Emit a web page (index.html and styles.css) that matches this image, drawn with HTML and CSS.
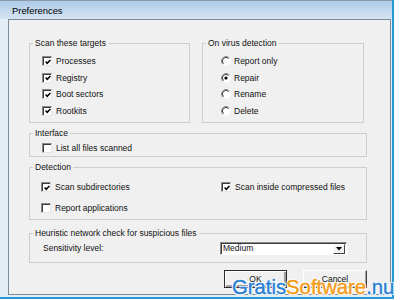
FILE: index.html
```html
<!DOCTYPE html>
<html>

<head>
    <meta charset="utf-8">
    <title>Preferences</title>
    <link rel="stylesheet" href="styles.css">
</head>

<body>
    <div class="window">
        <div class="titlebar">Preferences</div>
        <div class="frame">
            <div class="client">
                <div class="cols">
                    <fieldset class="group">
                        <legend>Scan these targets</legend>
                        <div class="rows targets">
                            <label class="opt"><span class="check"><svg viewBox="0 0 6 6"><path d="M0.6 2.6 L2.2 4.3 L5.4 0.9" /></svg></span>Processes</label>
                            <label class="opt"><span class="check"><svg viewBox="0 0 6 6"><path d="M0.6 2.6 L2.2 4.3 L5.4 0.9" /></svg></span>Registry</label>
                            <label class="opt"><span class="check"><svg viewBox="0 0 6 6"><path d="M0.6 2.6 L2.2 4.3 L5.4 0.9" /></svg></span>Boot sectors</label>
                            <label class="opt"><span class="check"><svg viewBox="0 0 6 6"><path d="M0.6 2.6 L2.2 4.3 L5.4 0.9" /></svg></span>Rootkits</label>
                        </div>
                    </fieldset>
                    <fieldset class="group">
                        <legend>On virus detection</legend>
                        <div class="rows actions">
                            <label class="opt"><svg class="radio" viewBox="0 0 10 10"><circle cx="5" cy="5" r="4.5" fill="#fff" /><path class="dark" d="M8.2 1.8 A4.5 4.5 0 0 0 1.8 8.2" /><path class="darker" d="M7.5 2.5 A3.5 3.5 0 0 0 2.5 7.5" /></svg>Report only</label>
                            <label class="opt"><svg class="radio" viewBox="0 0 10 10"><circle cx="5" cy="5" r="4.5" fill="#fff" /><path class="dark" d="M8.2 1.8 A4.5 4.5 0 0 0 1.8 8.2" /><path class="darker" d="M7.5 2.5 A3.5 3.5 0 0 0 2.5 7.5" /><circle cx="5" cy="5" r="1.6" fill="#000" /></svg>Repair</label>
                            <label class="opt"><svg class="radio" viewBox="0 0 10 10"><circle cx="5" cy="5" r="4.5" fill="#fff" /><path class="dark" d="M8.2 1.8 A4.5 4.5 0 0 0 1.8 8.2" /><path class="darker" d="M7.5 2.5 A3.5 3.5 0 0 0 2.5 7.5" /></svg>Rename</label>
                            <label class="opt"><svg class="radio" viewBox="0 0 10 10"><circle cx="5" cy="5" r="4.5" fill="#fff" /><path class="dark" d="M8.2 1.8 A4.5 4.5 0 0 0 1.8 8.2" /><path class="darker" d="M7.5 2.5 A3.5 3.5 0 0 0 2.5 7.5" /></svg>Delete</label>
                        </div>
                    </fieldset>
                </div>

                <fieldset class="group interface">
                    <legend>Interface</legend>
                    <div class="rows single">
                        <label class="opt"><span class="check"></span>List all files scanned</label>
                    </div>
                </fieldset>

                <fieldset class="group detection">
                    <legend>Detection</legend>
                    <div class="detect-grid">
                        <label class="opt"><span class="check"><svg viewBox="0 0 6 6"><path d="M0.6 2.6 L2.2 4.3 L5.4 0.9" /></svg></span>Scan subdirectories</label>
                        <label class="opt"><span class="check"><svg viewBox="0 0 6 6"><path d="M0.6 2.6 L2.2 4.3 L5.4 0.9" /></svg></span>Scan inside compressed files</label>
                        <label class="opt"><span class="check"></span>Report applications</label>
                    </div>
                </fieldset>

                <fieldset class="group heuristic">
                    <legend>Heuristic network check for suspicious files</legend>
                    <div class="sens-row">
                        <span>Sensitivity level:</span>
                        <div class="select">
                            <span class="select-value">Medium</span>
                            <span class="drop"><svg viewBox="0 0 6 4"><path d="M0 0 H6 L3 3.5 Z" /></svg></span>
                        </div>
                    </div>
                </fieldset>

                <div class="buttons">
                    <div class="btn default">OK</div>
                    <div class="btn">Cancel</div>
                </div>
            </div>
        </div>
        <div class="watermark"><span class="blue">Gratis</span><span class="orange">Software</span><span class="blue">.nu</span></div>
    </div>
</body>

</html>
```

FILE: styles.css
```css
* {
    box-sizing: border-box;
}

body {
    margin: 0;
    background: #fdfdfd;
    font-family: 'Liberation Sans', Arial, sans-serif;
}

.window {
    position: relative;
    width: 394px;
    height: 299px;
    display: flex;
    flex-direction: column;
    background: #e4ecf5;
    border-right: solid 2px #239bd6;
    border-bottom: solid 2px #239bd6;
}

.titlebar {
    height: 19px;
    padding-left: 12px;
    line-height: 20px;
    font-size: 9.4px;
    color: #000;
    border-top: solid 1px #8d9cad;
    background: linear-gradient(180deg, #aecae8 0%, #c6dbef 60%, #d4e3f2 100%);
}

.frame {
    flex: 1;
    display: flex;
    padding: 0 1px 2px 8px;
}

.client {
    flex: 1;
    background: #f0f0f0;
    border: solid 1px #7d8a98;
    padding: 18px 23px 0 20px;
    font-size: 8.5px;
    color: #111;
}

.cols {
    display: grid;
    grid-template-columns: 161px 162px;
    column-gap: 12px;
}

.group {
    margin: 0;
    padding: 0;
    min-width: 0;
    border: solid 1px #cdcdcd;
}

.group legend {
    margin-left: 3px;
    padding: 0 2px;
    line-height: 10px;
    font-size: 8.5px;
}

.rows {
    padding: 5px 0 3px 12px;
}

.rows.actions {
    padding-left: 18px;
}

.rows.single {
    padding: 2px 0 0 12px;
}

.opt {
    display: flex;
    align-items: center;
    gap: 4px;
    height: 16.5px;
    white-space: nowrap;
}

.rows.single .opt,
.detect-grid .opt {
    height: 16px;
}

.check {
    width: 10px;
    height: 10px;
    flex: none;
    display: flex;
    align-items: center;
    justify-content: center;
    background: #fff;
    border: solid 1px;
    border-color: #8a8a8a #e6e6e6 #e6e6e6 #8a8a8a;
    box-shadow: inset 1px 1px 0 #3c3c3c;
}

.check svg {
    width: 6px;
    height: 6px;
    margin: 1px 0 0 1px;
}

.check path {
    fill: none;
    stroke: #000;
    stroke-width: 1.5;
}

.radio {
    width: 10px;
    height: 10px;
    flex: none;
    margin-right: -1px;
}

.radio path {
    fill: none;
    stroke-width: 1;
}

.radio .dark {
    stroke: #8a8a8a;
}

.radio .darker {
    stroke: #3c3c3c;
}

.interface {
    margin-top: 5px;
}

.detection {
    margin-top: 5px;
}

.detect-grid {
    display: grid;
    grid-template-columns: 180px 1fr;
    row-gap: 5px;
    padding: 7px 0 3px 11px;
}

.heuristic {
    margin-top: 8px;
}

.sens-row {
    display: grid;
    grid-template-columns: 177px 127px;
    align-items: center;
    height: 16px;
    margin: 2px 0 6px 13px;
}

.select {
    height: 13px;
    display: flex;
    align-items: stretch;
    background: #fff;
    border: solid 1px;
    border-color: #8a8a8a #fff #fff #8a8a8a;
    box-shadow: inset 1px 1px 0 #3c3c3c;
}

.select-value {
    flex: 1;
    padding-left: 2px;
    line-height: 11px;
}

.drop {
    width: 12px;
    margin: 1px 1px 0 0;
    display: flex;
    align-items: center;
    justify-content: center;
    background: #f0f0f0;
    border: solid 1px;
    border-color: #fff #404040 #404040 #fff;
}

.drop svg {
    width: 6px;
    height: 4px;
}

.buttons {
    display: flex;
    justify-content: flex-end;
    gap: 16px;
    margin-top: 7px;
}

.btn {
    width: 63px;
    height: 18px;
    line-height: 16px;
    text-align: center;
    font-size: 8.5px;
    background: #f0f0f0;
    border: solid 1px;
    border-color: #fff #404040 #404040 #fff;
    box-shadow: inset -1px -1px 0 #a0a0a0;
}

.btn.default {
    border-color: #2a2a2a;
    box-shadow: inset 1px 1px 0 #fff, inset -2px -2px 0 #a0a0a0;
}

.btn + .btn {
    width: 64px;
}

/* site watermark laid over the dialog */
.watermark {
    position: absolute;
    left: 232px;
    top: 277px;
    font-size: 20.3px;
    line-height: 20px;
    white-space: nowrap;
    -webkit-text-stroke: 0.4px currentColor;
    text-shadow: 1px 1px 0 #fff, -1px -1px 0 #fff, 1px -1px 0 #fff, -1px 1px 0 #fff;
}

.blue {
    color: #2a80d4;
}

.orange {
    color: #f49b17;
}
```
